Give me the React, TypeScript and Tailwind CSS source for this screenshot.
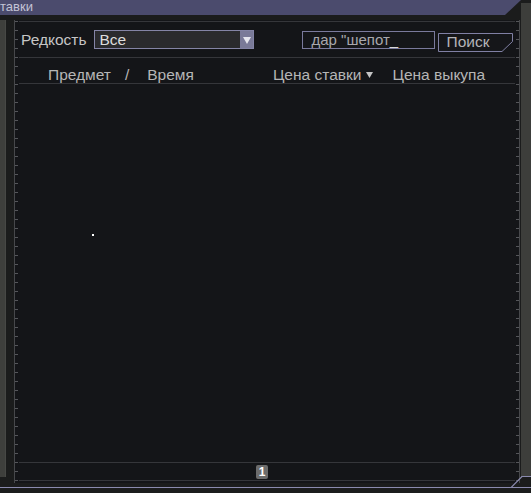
import React from 'react';

const font = { fontFamily: '"Liberation Sans", Arial, sans-serif' };

function Ticks({ side }: { side: 'left' | 'right' }) {
  return (
    <div
      className={`absolute top-0 bottom-0 w-[3px] bg-[repeating-linear-gradient(to_bottom,transparent_0_1px,#55565a_1px_2px,transparent_2px_9px)] ${
        side === 'left' ? 'left-0' : 'right-0'
      }`}
    />
  );
}

function SearchButton() {
  return (
    <button className="relative h-[19px] w-[75px] pl-[8px] text-left text-[15.5px] leading-[18px] text-[#b4b4b8]">
      <svg className="absolute inset-0" width="75" height="19" viewBox="0 0 75 19">
        <path d="M0.5 0.5 H74.5 V8.5 L64 18.5 H0.5 Z" fill="#151619" stroke="#8080a4" strokeWidth="1" />
      </svg>
      <span className="relative">Поиск</span>
    </button>
  );
}

export default function App() {
  return (
    <div className="relative flex h-[493px] w-[531px] flex-col overflow-hidden bg-[#1b1c1c]" style={font}>
      <div className="flex h-[487px]">
        <div className="flex w-[521px] flex-col">
          <div className="h-[15px] overflow-hidden bg-[#4b4b6d] [clip-path:polygon(0_0,100%_0,calc(100%-16px)_100%,0_100%)]">
            <span className="block text-[13px] leading-[14px] text-[#c4c4d6]">тавки</span>
          </div>
          <div className="mt-[5px] flex flex-1">
            <div className="flex h-[457px] w-[6px] flex-col bg-[#474845]">
              <div className="h-[457px] w-[5px] bg-[#3e3f3c]" />
            </div>
            <div className="w-[8px]" />
            <div className="relative flex h-[463px] w-[506px] flex-col border-x border-[#47484b] bg-[#141518] px-[4px]">
              <Ticks side="left" />
              <Ticks side="right" />
              <div className="mt-[1px] flex flex-1 flex-col border-t border-[#35363a]">
                <div className="mt-[8px] flex h-[19px] items-center">
                  <span className="ml-[2px] text-[15.5px] leading-[18px] text-[#c6c6c6]">Редкость</span>
                  <div className="ml-[8px] flex h-[19px] w-[160px] border border-[#8484a6] bg-[#2a2a2d]">
                    <span className="flex-1 pl-[4px] text-[15.5px] leading-[17px] text-[#dcdcdc]">Все</span>
                    <div className="flex w-[13px] items-center justify-center bg-[#7a7a98]">
                      <svg width="8" height="8" viewBox="0 0 8 8">
                        <path d="M0 1 H8 L4 8 Z" fill="#e6e6ee" />
                      </svg>
                    </div>
                  </div>
                  <div className="ml-[48px] flex h-[18px] w-[133px] items-end border border-[#7a7a9c] bg-[#151619] pl-[8px]">
                    <span className="text-[15px] leading-[16px] text-[#a8a8ac]">
                      дар "шепот<span className="text-[#d8d8d8]">_</span>
                    </span>
                  </div>
                  <div className="ml-[3px] self-start">
                    <SearchButton />
                  </div>
                </div>
                <div className="mt-[8px] border-t border-[#35363a]" />
                <div className="flex h-[26px] items-end border-b border-[#35363a] text-[15.5px] leading-[17px] text-[#b6b6b6]">
                  <span className="ml-[29px]">Предмет</span>
                  <span className="ml-[14px]">/</span>
                  <span className="ml-[18px]">Время</span>
                  <span className="ml-[79px] flex items-center">
                    Цена ставки
                    <svg className="ml-[5px]" width="7" height="7" viewBox="0 0 7 7">
                      <path d="M0 1 H7 L3.5 7 Z" fill="#c4c4c4" />
                    </svg>
                  </span>
                  <span className="ml-[19px]">Цена выкупа</span>
                </div>
                <div className="relative flex-1">
                  <div className="absolute left-[73px] top-[150px] h-[2px] w-[2px] bg-white" />
                </div>
                <div className="flex h-[19px] items-center border-y border-[#35363a] pl-[237px]">
                  <div className="flex h-[14px] w-[12px] items-center justify-center rounded-[2px] bg-[#6c6c6c] text-[12px] font-bold leading-[12px] text-white">
                    1
                  </div>
                </div>
                <div className="h-[2px]" />
              </div>
            </div>
          </div>
        </div>
        <div className="mt-[3px] h-[474px] w-[10px] border-b border-[#5a5b58] bg-[#3d3e3b]" />
      </div>
      <div className="relative h-[6px] border-t border-[#8a8aae]">
        <svg className="absolute -top-[12px] right-0" width="20" height="12" viewBox="0 0 20 12">
          <path d="M0 11.5 L11 0.5 H20" fill="none" stroke="#8a8aae" strokeWidth="1.2" />
        </svg>
      </div>
    </div>
  );
}
